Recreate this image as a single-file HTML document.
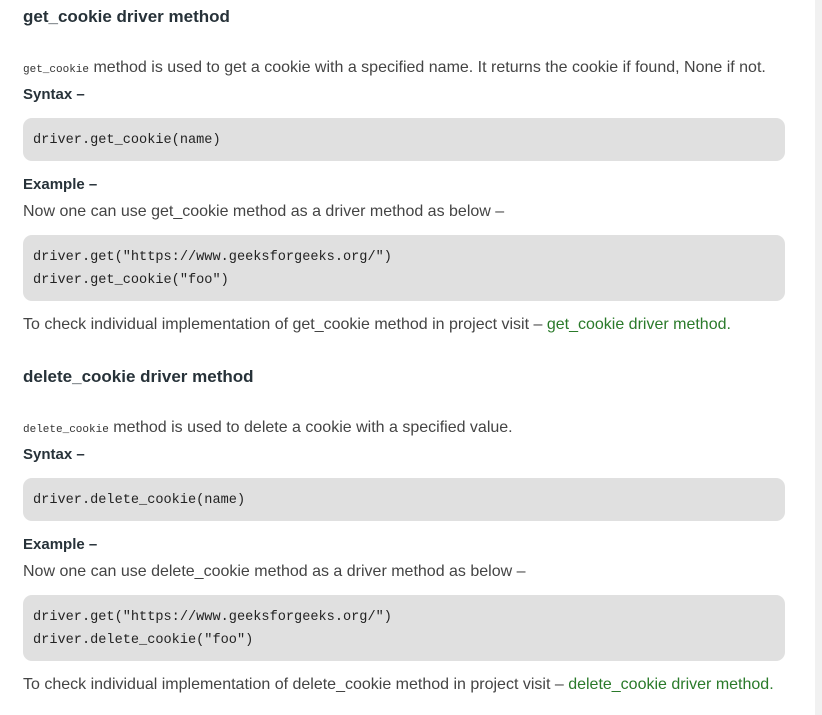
<!DOCTYPE html>
<html><head><meta charset="utf-8"><style>
html,body{margin:0;padding:0;width:822px;height:715px;overflow:hidden;background:#fff;position:relative;font-family:"Liberation Sans",sans-serif;}
.sb{position:absolute;left:815px;top:0;width:7px;height:715px;background:#f1f1f1;}
.t{position:absolute;left:23px;white-space:nowrap;line-height:20px;}
.h{font-size:17px;font-weight:bold;color:#273239;}
.p{font-size:16px;color:#444;letter-spacing:0;}
.b{font-size:15px;font-weight:bold;color:#273239;}
.ic{font-family:"Liberation Mono",monospace;font-size:11px;color:#333;letter-spacing:0;}
.box{position:absolute;left:23px;width:762px;background:#e0e0e0;border-radius:9px;}
.code{position:absolute;left:33px;font-family:"Liberation Mono",monospace;font-size:13.6px;color:#222;white-space:pre;line-height:23px;}
a{color:#2a7a2a;text-decoration:none;}
</style></head><body>
<div class="sb"></div>

<div class="t h" style="top:7px">get_cookie driver method</div>
<div class="t p" style="top:58px"><span class="ic">get_cookie</span> method is used to get a cookie with a specified name. It returns the cookie if found, None if not.</div>
<div class="t b" style="top:85px">Syntax –</div>
<div class="box" style="top:118px;height:43px"></div>
<div class="code" style="top:129px">driver.get_cookie(name)</div>
<div class="t b" style="top:175px">Example –</div>
<div class="t p" style="top:202px">Now one can use get_cookie method as a driver method as below –</div>
<div class="box" style="top:235px;height:66px"></div>
<div class="code" style="top:246px">driver.get("https://www.geeksforgeeks.org/")
driver.get_cookie("foo")</div>
<div class="t p" style="top:315px">To check individual implementation of get_cookie method in project visit – <a>get_cookie driver method.</a></div>

<div class="t h" style="top:367px">delete_cookie driver method</div>
<div class="t p" style="top:418px"><span class="ic">delete_cookie</span> method is used to delete a cookie with a specified value.</div>
<div class="t b" style="top:445px">Syntax –</div>
<div class="box" style="top:478px;height:43px"></div>
<div class="code" style="top:489px">driver.delete_cookie(name)</div>
<div class="t b" style="top:535px">Example –</div>
<div class="t p" style="top:562px">Now one can use delete_cookie method as a driver method as below –</div>
<div class="box" style="top:595px;height:66px"></div>
<div class="code" style="top:606px">driver.get("https://www.geeksforgeeks.org/")
driver.delete_cookie("foo")</div>
<div class="t p" style="top:675px">To check individual implementation of delete_cookie method in project visit – <a>delete_cookie driver method.</a></div>
</body></html>
